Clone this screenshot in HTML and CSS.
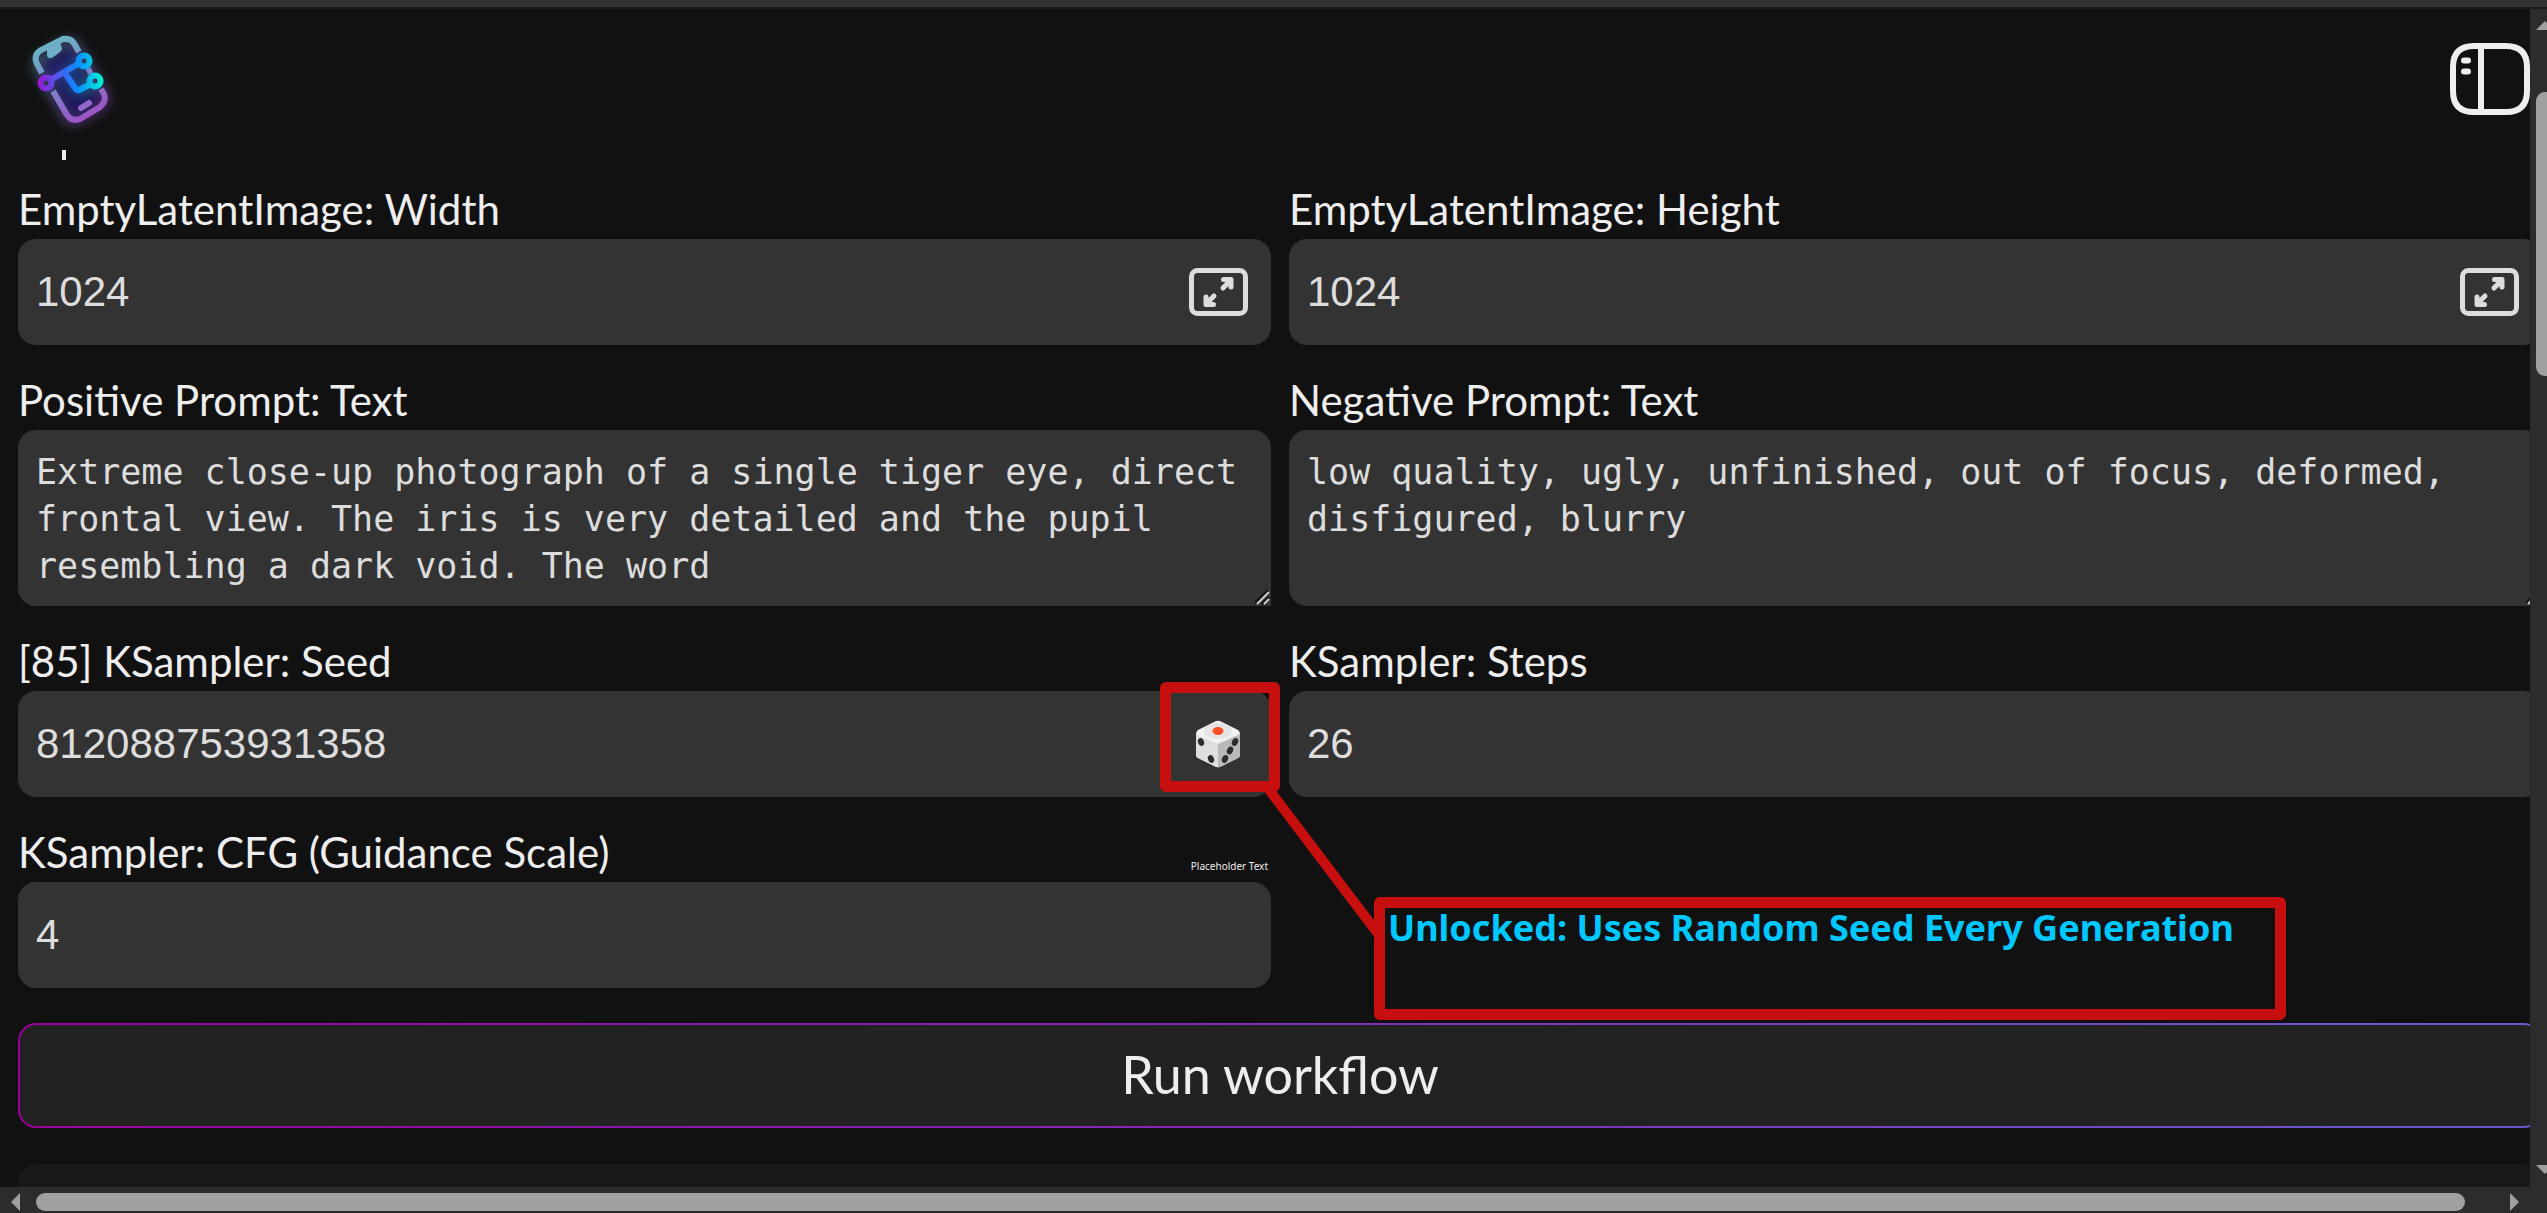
FILE: index.html
```html
<!DOCTYPE html>
<html lang="en">
<head>
<meta charset="utf-8">
<title>Workflow</title>
<link rel="stylesheet" href="styles.css">
</head>
<body>
<div class="topbar"></div>
<div class="viewport">
  <div class="pane">
    <header class="header">
      <a class="logo" href="#" aria-label="Home">
        <svg width="105" height="105" viewBox="0 0 105 105">
          <defs>
            <linearGradient id="phone" gradientUnits="userSpaceOnUse" x1="30" y1="10" x2="70" y2="94">
              <stop offset="0" stop-color="#68b9c4"/><stop offset=".5" stop-color="#7b83c9"/><stop offset="1" stop-color="#a14fc4"/>
            </linearGradient>
            <linearGradient id="nodes" gradientUnits="userSpaceOnUse" x1="20" y1="55" x2="86" y2="55">
              <stop offset="0" stop-color="#9a14cf"/><stop offset=".25" stop-color="#5a50ea"/><stop offset=".6" stop-color="#0b8cff"/><stop offset="1" stop-color="#00f6d2"/>
            </linearGradient>
            <filter id="glow" x="-50%" y="-50%" width="200%" height="200%"><feGaussianBlur stdDeviation="6"/></filter>
          </defs>
          <g filter="url(#glow)" opacity=".55">
            <rect x="29" y="16" width="48" height="76" rx="11" fill="#2b1a9a" stroke="url(#phone)" stroke-width="5" transform="rotate(-30 53 53)"/>
            <path d="M28 55L66 33M47 45L60 62L77 53" fill="none" stroke="url(#nodes)" stroke-width="7"/>
          </g>
          <path fill="none" stroke="url(#phone)" stroke-width="6" d="M24 45L19 36Q15 27 23 22L45 11Q54 10 57 17L61 24M35 63L49 87Q54 94 62 91L82 79Q89 73 86 66L83 61M69 44L74 42"/>
          <path fill="#6faec9" d="M29 20L42 13L44 21Q43 24 35 29Q31 32 29 28Z"/>
          <path stroke="#9268cb" stroke-width="6" stroke-linecap="round" d="M63 80L71 75"/>
          <path fill="none" stroke="url(#nodes)" stroke-width="6" stroke-linejoin="round" d="M34 51L60 36M47 45L57 60Q59 64 63 61L73 56"/>
          <g fill="none" stroke="url(#nodes)" stroke-width="6"><circle cx="28" cy="55" r="5.500"/><circle cx="66" cy="33" r="5.500"/><circle cx="77" cy="53" r="5.500"/></g>
        </svg>
      </a>
      <button class="icon-button" aria-label="Toggle sidebar">
        <svg width="80" height="72" viewBox="0 0 80 72" fill="none" stroke="#eee" stroke-width="6">
          <path d="M24 3H56Q77 3 77 24V48Q77 69 56 69H24Q3 69 3 48V24Q3 3 24 3ZM31 3V69"/>
          <path stroke-linecap="round" d="M14 17.500H18M14 28.500H18"/>
        </svg>
      </button>
    </header>
    <main class="content">
      <div class="scrolled-text" aria-hidden="true"></div>
      <form class="fields">
        <div class="field">
          <label for="width">EmptyLatentImage: Width</label>
          <div class="control"><input id="width" value="1024">
            <button type="button" class="field-button" aria-label="Sizes"><svg width="59" height="48" viewBox="0 0 59 48" fill="none" stroke="#ddd" stroke-width="5" stroke-linecap="round" stroke-linejoin="round"><rect x="2.500" y="2.500" width="54" height="43" rx="6"/><path d="M34 20L41 13M34.500 11.500H42V19M25 28L18 35M17 29V36.500H24.500"/></svg></button></div>
        </div>
        <div class="field">
          <label for="height">EmptyLatentImage: Height</label>
          <div class="control"><input id="height" value="1024">
            <button type="button" class="field-button" aria-label="Sizes"><svg width="59" height="48" viewBox="0 0 59 48" fill="none" stroke="#ddd" stroke-width="5" stroke-linecap="round" stroke-linejoin="round"><rect x="2.500" y="2.500" width="54" height="43" rx="6"/><path d="M34 20L41 13M34.500 11.500H42V19M25 28L18 35M17 29V36.500H24.500"/></svg></button></div>
        </div>
        <div class="field">
          <label for="positive">Positive Prompt: Text</label>
          <div class="prompt"><textarea id="positive" rows="3" spellcheck="false">Extreme close-up photograph of a single tiger eye, direct frontal view. The iris is very detailed and the pupil resembling a dark void. The word</textarea>
            <svg class="grip" width="16" height="16" viewBox="0 0 16 16" fill="none"><path stroke="#111" stroke-width="2" d="M0 13L13 0M7 14L14 7"/><path stroke="#ccc" stroke-width="2" d="M2 14L14 2M9 14L14 9"/></svg></div>
        </div>
        <div class="field">
          <label for="negative">Negative Prompt: Text</label>
          <div class="prompt"><textarea id="negative" rows="3" spellcheck="false">low quality, ugly, unfinished, out of focus, deformed, disfigured, blurry</textarea>
            <svg class="grip" width="16" height="16" viewBox="0 0 16 16" fill="none"><path stroke="#111" stroke-width="2" d="M0 13L13 0M7 14L14 7"/><path stroke="#ccc" stroke-width="2" d="M2 14L14 2M9 14L14 9"/></svg></div>
        </div>
        <div class="field">
          <label for="seed">[85] KSampler: Seed</label>
          <div class="control"><input id="seed" value="812088753931358">
            <button type="button" class="field-button dice" aria-label="Random seed">
              <svg width="46" height="48" viewBox="0 0 46 48">
                <path fill="#f2f2f2" d="M20 1.500Q23 0 26 1.500L43 10Q45 11.500 45 14V34Q45 37 43 38L26 46.500Q23 48 20 46.500L3 38Q1 37 1 34V14Q1 11.500 3 10Z"/>
                <path fill="#dedede" d="M1 14L23 24V47.500L3 38Q1 37 1 34Z"/>
                <path fill="#b9b9b9" d="M23 24L45 14V34Q45 37 43 38L23 47.500Z"/>
                <ellipse cx="23" cy="11" rx="14" ry="8" fill="#e4e4e4"/>
                <ellipse cx="23" cy="11" rx="5.500" ry="4" fill="#ff4d24"/>
                <g fill="#2c2c2c"><ellipse cx="6" cy="22" rx="3" ry="4" transform="rotate(-20 6 22)"/><ellipse cx="16" cy="39" rx="3" ry="4" transform="rotate(-20 16 39)"/><ellipse cx="40" cy="22" rx="3" ry="4" transform="rotate(25 40 22)"/><ellipse cx="35" cy="30.500" rx="3" ry="4" transform="rotate(25 35 30.500)"/><ellipse cx="30" cy="39" rx="3" ry="4" transform="rotate(25 30 39)"/></g>
              </svg>
            </button>
            <div class="callout-target"></div>
            <svg class="callout-line" width="130" height="160" viewBox="0 0 130 160"><path d="M4 0L116 148" stroke="#c80f0f" stroke-width="10"/></svg>
            <div class="callout">Unlocked: Uses Random Seed Every Generation</div></div>
        </div>
        <div class="field">
          <label for="steps">KSampler: Steps</label>
          <div class="control"><input id="steps" value="26"></div>
        </div>
        <div class="field">
          <div class="label-row"><label for="cfg">KSampler: CFG (Guidance Scale)</label><span class="note">Placeholder Text</span></div>
          <div class="control"><input id="cfg" value="4"></div>
        </div>
      </form>
      <button class="run">Run workflow</button>
      <section class="card"></section>
    </main>
  </div>
  <div class="vbar"><svg width="17" height="12"><path fill="#a0a0a0" d="M6 10L15 1L24 10Z"/></svg><div class="vthumb"></div><svg class="down" width="17" height="12"><path fill="#a0a0a0" d="M6 1H24L15 10Z"/></svg></div>
</div>
<div class="hbar"><svg width="36" height="26"><path fill="#a0a0a0" d="M20 6V24L11 15Z"/></svg><div class="hthumb"></div><svg width="82" height="26"><path fill="#a0a0a0" d="M45 6V24L54 15Z"/></svg></div>
</body>
</html>
```
FILE: styles.css
```css
* { box-sizing: border-box; }
body {
  margin: 0;
  height: 100vh;
  display: flex;
  flex-direction: column;
  overflow: hidden;
  background: #111;
  color: #eee;
  font-family: Lato, sans-serif;
}
button { border: 0; padding: 0; background: none; color: inherit; font: inherit; }
svg { display: block; flex: none; }

.topbar { flex: none; height: 9px; background: #333; border-bottom: 2px solid #1c1c1c; }
.viewport { flex: 1; min-height: 0; display: flex; }
.pane { flex: 1; min-width: 0; overflow: hidden; }

.header { height: 141px; padding: 19px 0 0 18px; display: flex; justify-content: space-between; }
.icon-button { height: 72px; margin-top: 15px; }

.content { width: calc(100% + 30px); padding: 0 18px; }
.scrolled-text { width: 4px; height: 10px; margin: 0 0 29px 44px; background: #eee; }
.fields { display: grid; grid-template-columns: 1fr 1fr; gap: 35px 18px; }
.field { min-width: 0; }
.field label { display: block; padding-bottom: 10px; font-size: 42px; line-height: 40px; white-space: nowrap; }
.label-row { display: flex; justify-content: space-between; align-items: flex-end; }
.note { font-family: "Noto Sans", sans-serif; font-size: 10px; line-height: 14px; padding: 0 3px 9px 0; }

.control { position: relative; height: 106px; }
.prompt { position: relative; }
.field input, .field textarea {
  display: block;
  width: 100%;
  border: 0;
  outline: 0;
  border-radius: 18px;
  background: #333;
  color: #ddd;
}
.field input { height: 100%; padding: 0 18px; font: 42px "Liberation Sans", sans-serif; }
.field textarea {
  height: 176px;
  padding: 19px 18px 0;
  border-bottom-right-radius: 0;
  font: 35px/47px "DejaVu Sans Mono", monospace;
  overflow: hidden;
  resize: none;
}
.grip { position: absolute; right: 0; bottom: 0; }

.field-button { position: absolute; right: 23px; top: 29px; }
.dice { right: 30px; }

.callout-target {
  position: absolute;
  right: -9px;
  top: -9px;
  width: 120px;
  height: 110px;
  border: 11px solid #c80f0f;
  border-radius: 6px;
}
.callout-line { position: absolute; left: calc(100% - 8px); top: 96px; z-index: 2; }
.callout {
  position: absolute;
  left: calc(100% + 103px);
  top: 206px;
  z-index: 2;
  width: 912px;
  height: 123px;
  border: 11px solid #c80f0f;
  border-radius: 6px;
  padding: 0 3px;
  color: #00c8ff;
  font: bold 36px/40px "Noto Sans", sans-serif;
  white-space: nowrap;
}

.run {
  display: block;
  width: 100%;
  height: 105px;
  margin: 35px 0 36px;
  padding-bottom: 4px;
  border: 2px solid transparent;
  border-radius: 18px;
  background: linear-gradient(#222, #222) padding-box, linear-gradient(90deg, #909, #6a5acd) border-box;
  font-size: 52px;
  line-height: 70px;
}
.card { height: 200px; border-radius: 18px; background: #191919; }

.vbar { flex: none; width: 17px; padding: 11px 0; background: #2c2c2c; display: flex; flex-direction: column; overflow: hidden; }
.vthumb { width: 18px; height: 284px; margin: 60px 0 0 6px; border-radius: 9px 0 0 9px; background: #a0a0a0; }
.down { margin-top: auto; }
.hbar { flex: none; height: 26px; background: #2c2c2c; display: flex; align-items: center; }
.hthumb { flex: 1; height: 18px; margin-top: 4px; border-radius: 9px; background: #a0a0a0; }
```
